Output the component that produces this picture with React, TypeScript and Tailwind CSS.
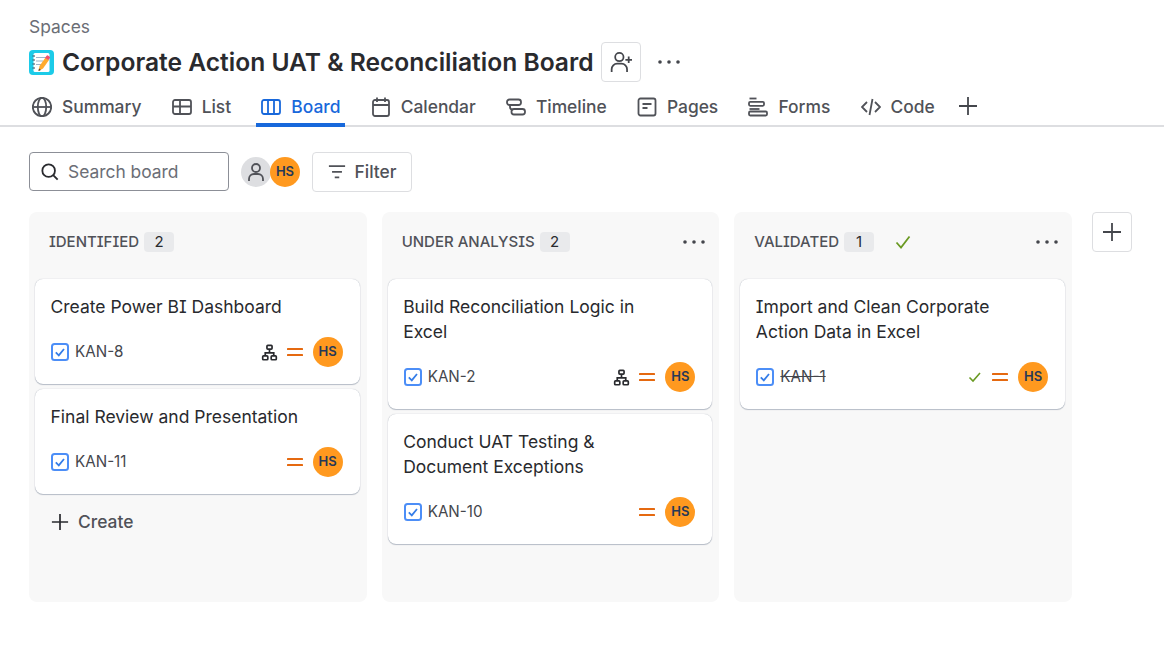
import type { ReactNode } from 'react';

function Icon({ size = 20, width = 1.8, className = '', children }: { size?: number; width?: number; className?: string; children: ReactNode }) {
  return (
    <svg width={size} height={size} viewBox="0 0 20 20" className={`shrink-0 ${className}`} fill="none" stroke="currentColor" strokeWidth={width}>
      {children}
    </svg>
  );
}

const tabs: { label: string; icon: ReactNode; active?: boolean }[] = [
  {
    label: 'Summary',
    icon: (
      <>
        <circle cx="10" cy="10" r="9.2" />
        <ellipse cx="10" cy="10" rx="4.2" ry="9.2" />
        <path d="M1 10h18" />
      </>
    ),
  },
  {
    label: 'List',
    icon: (
      <>
        <rect x="1" y="3" width="18" height="14" rx="2" />
        <path d="M1 9.500h18M8 3v14" />
      </>
    ),
  },
  {
    label: 'Board',
    active: true,
    icon: (
      <>
        <rect x="1" y="3" width="18" height="14" rx="2" />
        <path d="M7 3v14M13 3v14" />
      </>
    ),
  },
  {
    label: 'Calendar',
    icon: (
      <>
        <rect x="2" y="3" width="16" height="16" rx="2" />
        <path d="M2 8h16M6 .5v4.500M14 .5v4.500" />
      </>
    ),
  },
  {
    label: 'Timeline',
    icon: (
      <>
        <rect x="1" y="2.500" width="14" height="5.500" rx="2.500" />
        <rect x="5.500" y="12" width="13.500" height="5.500" rx="2.500" />
        <path d="M4 8v2a2.500 2.500 0 0 0 2.500 2.500" />
      </>
    ),
  },
  {
    label: 'Pages',
    icon: (
      <>
        <rect x="1.500" y="1.500" width="17" height="17" rx="2" />
        <path d="M5.500 7h9M5.500 11h5" />
      </>
    ),
  },
  {
    label: 'Forms',
    icon: (
      <>
        <path d="M1.500 1.500h7" />
        <rect x="1" y="4.800" width="15" height="4" rx="1.200" />
        <path d="M1.500 12h10" />
        <rect x="1" y="14.500" width="18" height="4" rx="1.200" />
      </>
    ),
  },
  {
    label: 'Code',
    icon: <path d="M6 5 1 10l5 5M14 5l5 5-5 5M11.500 2 8.500 18" />,
  },
];

function Avatar() {
  return (
    <span className="flex h-[30px] w-[30px] shrink-0 items-center justify-center rounded-full bg-[#ff991f] text-[13px] font-semibold text-[#253858]">
      HS
    </span>
  );
}

function Dots() {
  return (
    <svg width="22" height="4" viewBox="0 0 22 4" className="shrink-0 text-[#44464c]" fill="currentColor">
      <circle cx="2" cy="2" r="1.800" />
      <circle cx="11" cy="2" r="1.800" />
      <circle cx="20" cy="2" r="1.800" />
    </svg>
  );
}

function Priority() {
  return (
    <svg width="16" height="10" viewBox="0 0 16 10" className="shrink-0 text-[#e56910]" fill="currentColor">
      <rect x="0" y="1" width="16" height="2" rx="0.600" />
      <rect x="0" y="7" width="16" height="2" rx="0.600" />
    </svg>
  );
}

function Hierarchy() {
  return (
    <Icon size={17} width={2} className="-mr-[1px] text-[#292a2e]">
      <rect x="7" y="1.500" width="6" height="4.500" rx="1" />
      <rect x="2" y="14" width="6" height="4.500" rx="1" />
      <rect x="12" y="14" width="6" height="4.500" rx="1" />
      <path d="M10 6v4.500M5 14v-3.500h10V14" />
    </Icon>
  );
}

function TaskIcon() {
  return (
    <svg width="18" height="18" viewBox="0 0 18 18" className="shrink-0" fill="none">
      <rect x="1" y="1" width="16" height="16" rx="2.500" stroke="#4c8ef7" strokeWidth="2" />
      <path d="m4.800 9.300 3 3 5.200-6.300" stroke="#357de8" strokeWidth="1.800" />
    </svg>
  );
}

function Card({ title, id, sub, done }: { title: string[]; id: string; sub?: boolean; done?: boolean }) {
  return (
    <div className="rounded-[8px] bg-white pb-[17px] pl-[16px] pr-[17px] pt-[15px] shadow-[0_1px_1px_#091e4240,0_0_1px_#091e424f]">
      <div className="-ml-[0.500px] text-[17.500px] leading-[25px] text-[#292a2e]">
        {title.map(line => (
          <div key={line}>{line}</div>
        ))}
      </div>
      <div className="mt-[18px] flex h-[30px] items-center">
        <TaskIcon />
        <span className={`ml-[6px] text-[15.200px] text-[#44464c] ${done ? 'line-through' : ''}`}>{id}</span>
        <div className="ml-auto flex items-center gap-[10px]">
          {sub && <Hierarchy />}
          {done && (
            <svg width="14" height="14" viewBox="0 0 14 14" fill="none" className="shrink-0">
              <path d="m1.500 7.500 3.500 3.500 7-8" stroke="#6a9a23" strokeWidth="1.600" />
            </svg>
          )}
          <Priority />
          <Avatar />
        </div>
      </div>
    </div>
  );
}

function Column({ name, count, menu, check, children }: { name: string; count: number; menu?: boolean; check?: boolean; children: ReactNode }) {
  return (
    <div className="h-[390px] min-w-0 flex-1 rounded-[8px] bg-[#f8f8f8] py-[6px] pl-[6px] pr-[7px]">
      <div className="mb-[13px] flex h-[48px] items-center pl-[14px] pr-[7px]">
        <span className="text-[15px] font-medium text-[#505258]">{name}</span>
        <span className="ml-[5px] flex h-[20px] w-[30px] items-center justify-center rounded-[4px] bg-[#e9eaec] text-[15px] text-[#292a2e]">
          {count}
        </span>
        {check && (
          <svg width="16" height="16" viewBox="0 0 16 16" fill="none" className="ml-[21px] shrink-0">
            <path d="m1.500 8.500 4.500 5 8.500-11" stroke="#6a9a23" strokeWidth="1.800" />
          </svg>
        )}
        {menu && (
          <span className="ml-auto">
            <Dots />
          </span>
        )}
      </div>
      <div className="flex flex-col gap-[5px]">{children}</div>
    </div>
  );
}

export default function App() {
  return (
    <div className="min-h-[671px] bg-white font-['Inter',sans-serif] text-[#292a2e] [font-feature-settings:'cv08']">
      <div className="px-[29px] pt-[16px]">
        <div className="text-[17.400px] leading-[22px] text-[#6b6e76]">Spaces</div>
        <div className="mt-[4px] flex h-[40px] items-center">
          <svg width="25" height="25" viewBox="0 0 25 25" className="shrink-0">
            <rect width="25" height="25" rx="4" fill="#1ccbe8" />
            <rect x="4.500" y="3" width="16" height="19" rx="1.500" fill="#fff" />
            <path d="M7 7.500h10M7 11h7M7 14.500h5" stroke="#9fb4c9" strokeWidth="1" />
            <path d="M3.500 6h2.500M3.500 10h2.500M3.500 14h2.500M3.500 18h2.500" stroke="#345" strokeWidth="1" />
            <path d="m9.500 21 1-5 6-8.500 3.500 2.500-6 8.500z" fill="#ffab2e" />
            <path d="m16 8 1.600-2.300a1 1 0 0 1 1.400-.200l1.700 1.200a1 1 0 0 1 .200 1.400l-1.400 2z" fill="#f0506e" />
            <path d="m9.500 21 .500-2.600 2 1.500z" fill="#5a4030" />
          </svg>
          <h1 className="ml-[8px] whitespace-nowrap text-[24.600px] font-semibold leading-[40px] text-[#292a2e]">
            Corporate Action UAT &amp; Reconciliation Board
          </h1>
          <button className="ml-[7px] flex h-[40px] w-[40px] items-center justify-center rounded-[4px] border border-[#dddee1] text-[#44464c]">
            <Icon size={22} width={1.600}>
              <circle cx="8.500" cy="5.500" r="3.800" />
              <path d="M1.500 19v-2.500a5 5 0 0 1 5-5h4a5 5 0 0 1 5 5V19M14 8h6M17 5v6" />
            </Icon>
          </button>
          <span className="ml-[17px]">
            <Dots />
          </span>
        </div>
      </div>
      <div className="mt-[5px] flex h-[40px] items-stretch gap-[20.200px] border-b-2 border-[#dddee1] pl-[27px]">
        {tabs.map(tab => (
          <div
            key={tab.label}
            className={`-mb-[2px] flex items-center gap-[10px] px-[5px] text-[17.400px] font-medium ${
              tab.active ? 'border-b-[4px] border-[#1868db] pt-[4px] text-[#1868db]' : 'text-[#505258]'
            }`}
          >
            <Icon>{tab.icon}</Icon>
            <span>{tab.label}</span>
          </div>
        ))}
        <div className="-ml-[2px] flex items-center text-[#44464c]">
          <Icon>
            <path d="M10 1v18M1 10h18" />
          </Icon>
        </div>
      </div>
      <div className="mt-[25px] flex h-[40px] items-center px-[29px]">
        <div className="flex h-[39px] w-[200px] items-center self-start rounded-[4px] border border-[#8c8f97] pl-[11px]">
          <Icon size={18} width={2} className="text-[#292a2e]">
            <circle cx="8.500" cy="8.500" r="7" />
            <path d="m13.500 13.500 5 5" />
          </Icon>
          <span className="ml-[9px] pt-[1px] text-[17.400px] text-[#6b6e76]">Search board</span>
        </div>
        <div className="ml-[12px] flex h-[30px] w-[30px] items-center justify-center rounded-full bg-[#dddee1] text-[#505258]">
          <Icon size={20}>
            <circle cx="10" cy="6" r="4" />
            <path d="M3 19v-2a5 5 0 0 1 5-5h4a5 5 0 0 1 5 5v2" />
          </Icon>
        </div>
        <div className="-ml-[1px]">
          <Avatar />
        </div>
        <button className="ml-[12px] flex h-[40px] w-[100px] items-center justify-center gap-[9px] rounded-[4px] border border-[#dddee1] text-[17.400px] font-medium text-[#505258]">
          <Icon size={18} width={1.900}>
            <path d="M1 3.500h18M4.500 9.800h11M7.500 16h5" />
          </Icon>
          Filter
        </button>
      </div>
      <div className="mt-[20px] flex items-start pl-[29px] pr-[32px]">
        <div className="flex w-[1043px] shrink-0 gap-[15px]">
          <Column name="IDENTIFIED" count={2}>
            <Card title={['Create Power BI Dashboard']} id="KAN-8" sub />
            <Card title={['Final Review and Presentation']} id="KAN-11" />
            <div className="mt-[8px] flex h-[30px] items-center gap-[9px] pl-[16px] text-[17.400px] font-medium text-[#505258]">
              <Icon size={18} width={1.900} className="text-[#292a2e]">
                <path d="M10 1v18M1 10h18" />
              </Icon>
              Create
            </div>
          </Column>
          <Column name="UNDER ANALYSIS" count={2} menu>
            <Card title={['Build Reconciliation Logic in', 'Excel']} id="KAN-2" sub />
            <Card title={['Conduct UAT Testing &', 'Document Exceptions']} id="KAN-10" />
          </Column>
          <Column name="VALIDATED" count={1} menu check>
            <Card title={['Import and Clean Corporate', 'Action Data in Excel']} id="KAN-1" done />
          </Column>
        </div>
        <button className="ml-[20px] flex h-[40px] w-[40px] shrink-0 items-center justify-center rounded-[4px] border border-[#dddee1] text-[#44464c]">
          <Icon>
            <path d="M10 1v18M1 10h18" />
          </Icon>
        </button>
      </div>
    </div>
  );
}
